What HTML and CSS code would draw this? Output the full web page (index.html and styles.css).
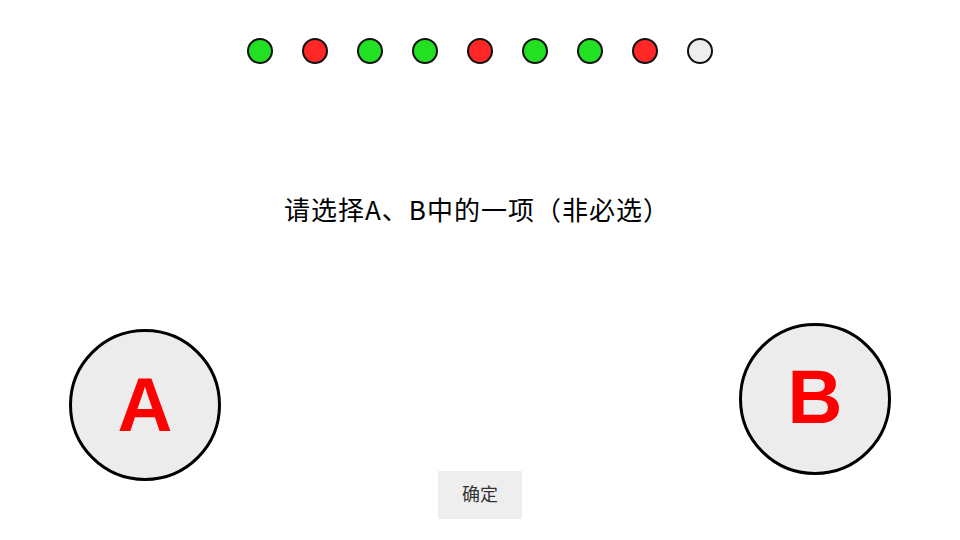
FILE: index.html
```html
<!DOCTYPE html>
<html lang="zh">
<head>
<meta charset="utf-8">
<title>选择</title>
<link rel="stylesheet" href="styles.css">
</head>
<body>
<div class="page">
  <div class="dots">
    <span class="dot green"></span>
    <span class="dot red"></span>
    <span class="dot green"></span>
    <span class="dot green"></span>
    <span class="dot red"></span>
    <span class="dot green"></span>
    <span class="dot green"></span>
    <span class="dot red"></span>
    <span class="dot empty"></span>
  </div>
  <div class="title">请选择A、B中的一项（非必选）</div>
  <div class="choices">
    <div class="choice choice-a">A</div>
    <button class="confirm">确定</button>
    <div class="choice choice-b">B</div>
  </div>
</div>
</body>
</html>
```
FILE: styles.css
```css
html, body {
  margin: 0;
  padding: 0;
  background: #ffffff;
}
.page {
  width: 960px;
  height: 540px;
  overflow: hidden;
  display: flex;
  flex-direction: column;
  font-family: "Noto Sans CJK SC", "Liberation Sans", sans-serif;
}
.dots {
  margin-top: 38px;
  display: flex;
  justify-content: center;
  gap: 29px;
}
.dot {
  width: 26px;
  height: 26px;
  box-sizing: border-box;
  border: 2px solid #111;
  border-radius: 50%;
}
.green { background: #22e022; }
.red { background: #ff2626; }
.empty { background: #eeeeee; }
.title {
  margin-top: 127px;
  height: 36px;
  line-height: 36px;
  font-size: 26px;
  letter-spacing: 1px;
  text-spacing-trim: space-all;
  text-align: center;
  color: #000;
  padding-right: 6px;
}
.choices {
  margin-top: 96px;
  height: 196px;
  padding: 0 69px;
  display: flex;
  justify-content: space-between;
  align-items: flex-start;
}
.choice {
  width: 152px;
  height: 152px;
  box-sizing: border-box;
  border: 3px solid #000;
  border-radius: 50%;
  background: #ececec;
  color: #ff0000;
  font-family: "Liberation Sans", sans-serif;
  font-weight: bold;
  font-size: 76px;
  line-height: 1;
  display: flex;
  align-items: center;
  justify-content: center;
}
.choice-a { margin-top: 6px; }
.choice-b { padding-bottom: 4px; }
.confirm {
  align-self: flex-end;
  width: 84px;
  height: 48px;
  border: none;
  background: #eeeeee;
  color: #333;
  font-family: "Noto Sans CJK SC", sans-serif;
  font-size: 18px;
  line-height: 1;
  padding: 0 0 4px 0;
}
```
